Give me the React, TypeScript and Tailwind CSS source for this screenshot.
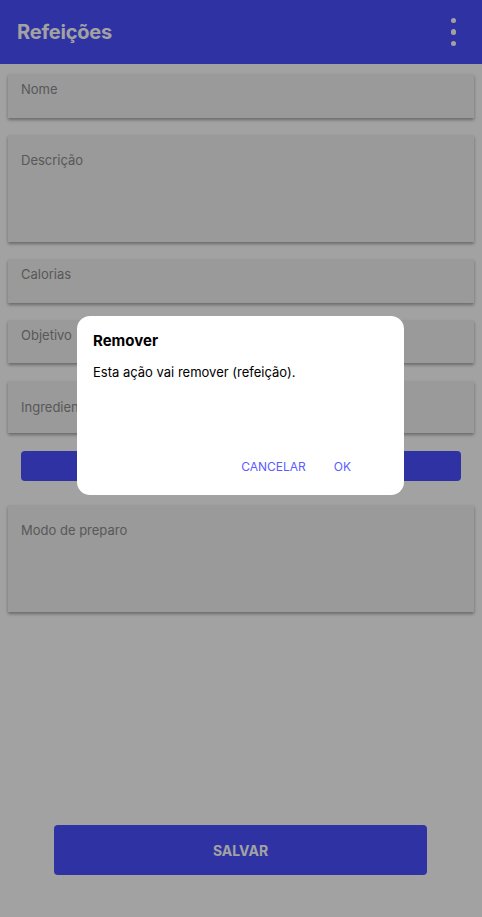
import React from "react";

const font = { fontFamily: "Inter, 'Noto Sans', sans-serif" };

function Field({
  label,
  className,
}: {
  label: string;
  className: string;
}) {
  return (
    <div
      className={`mx-2 bg-[#f2f2f2] px-[13px] text-[13px] leading-4 text-[#8c8c8c] shadow-[0_2px_3px_rgba(0,0,0,0.35)] ${className}`}
    >
      {label}
    </div>
  );
}

export default function App() {
  return (
    <div className="relative h-[917px] w-[482px] overflow-hidden bg-white" style={font}>
      <header className="flex h-16 items-center justify-between bg-[#4a4fff] pl-[17px] pr-[26px]">
        <h1 className="text-[20px] font-bold tracking-[-0.2px] text-white">Refeições</h1>
        <div className="flex flex-col gap-[6px]">
          <span className="h-[5.5px] w-[5.5px] rounded-full bg-white" />
          <span className="h-[5.5px] w-[5.5px] rounded-full bg-white" />
          <span className="h-[5.5px] w-[5.5px] rounded-full bg-white" />
        </div>
      </header>

      <div className="flex flex-col pt-[10px]">
        <Field label="Nome" className="h-[44px] pt-[7px]" />
        <Field label="Descrição" className="mt-[17px] h-[107px] pt-[17px]" />
        <Field label="Calorias" className="mt-[17px] h-[44px] pt-[7px]" />
        <Field label="Objetivo" className="mt-[17px] h-[43px] pt-[7px]" />
        <Field label="Ingredientes" className="mt-[18px] h-[52px] pt-[18px]" />
        <button className="mx-[21px] mt-[18px] h-[30px] rounded bg-[#4a4fff]" />
        <Field label="Modo de preparo" className="mt-[24px] h-[107px] pt-[17px]" />
      </div>

      <button className="absolute left-[54px] top-[825px] h-[50px] w-[373px] rounded bg-[#4a4fff] text-[14px] font-bold text-white">
        SALVAR
      </button>

      <div className="absolute inset-0 bg-[rgba(0,0,0,0.365)]" />

      <div className="absolute left-[77px] top-[316px] flex h-[179px] w-[327px] flex-col rounded-[13px] bg-white px-4 pt-[15px]">
        <h2 className="text-[15px] font-bold leading-5 text-black">Remover</h2>
        <p className="mt-[11px] text-[13px] leading-5 text-black">
          Esta ação vai remover (refeição).
        </p>
        <div className="mt-auto mb-[20px] flex justify-end gap-[28px] pr-[37px] text-[12px] leading-4 text-[#5a5cff]">
          <span>CANCELAR</span>
          <span>OK</span>
        </div>
      </div>
    </div>
  );
}
